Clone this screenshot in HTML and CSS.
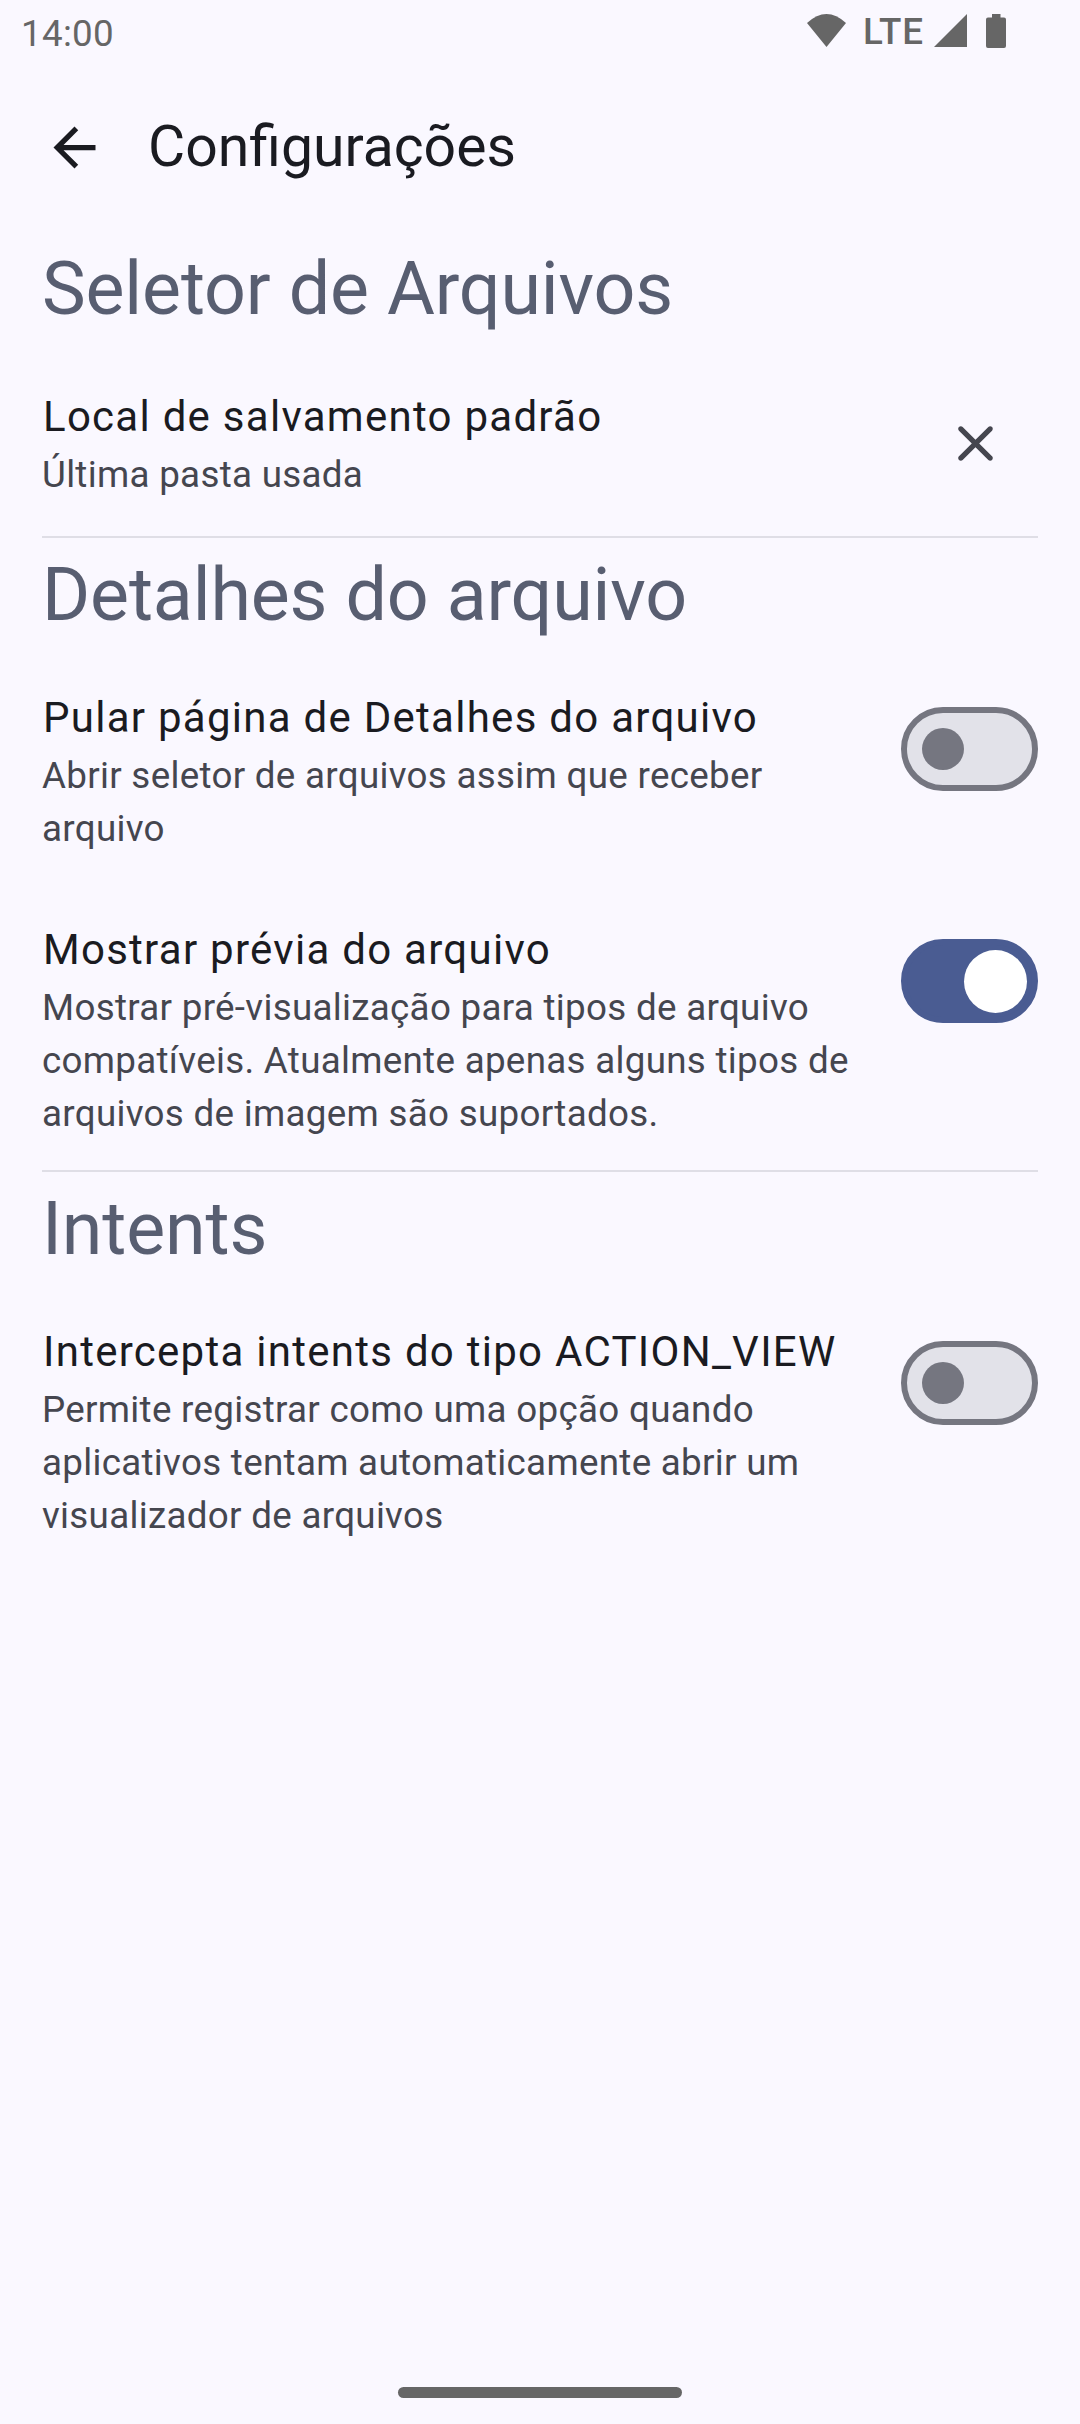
FILE: index.html
```html
<!DOCTYPE html>
<html lang="pt-BR">
<head>
<meta charset="utf-8">
<title>Configurações</title>
<link rel="stylesheet" href="styles.css">
</head>
<body>
<div class="screen">
  <header class="status">
    <span class="clock">14:00</span>
    <div class="indicators">
      <svg class="wifi" viewBox="0 0 39 33"><path d="M0 9Q19.500-9 39 9L19.500 33z"/></svg>
      <span class="network">LTE</span>
      <svg class="signal" viewBox="0 0 33 33"><path d="M33 0V33H0z"/></svg>
      <svg class="battery" viewBox="0 0 20 34"><path d="M6 0h8.500v3.500H18a2 2 0 0 1 2 2V32a2 2 0 0 1-2 2H2a2 2 0 0 1-2-2V5.500a2 2 0 0 1 2-2h4z"/></svg>
    </div>
  </header>
  <div class="appbar">
    <svg class="icon" viewBox="0 0 24 24"><path d="M20 11H7.830l5.590-5.590L12 4l-8 8 8 8 1.410-1.410L7.830 13H20z"/></svg>
    <h1 class="title">Configurações</h1>
  </div>
  <main class="content">
    <section class="section section-first">
      <h2 class="heading">Seletor de Arquivos</h2>
      <div class="row">
        <div class="text">
          <div class="label">Local de salvamento padrão</div>
          <div class="desc">Última pasta usada</div>
        </div>
        <button class="clear" aria-label="Limpar"><svg class="icon" viewBox="0 0 24 24"><path d="M18.300 5.710c-.39-.39-1.020-.39-1.410 0L12 10.590 7.110 5.700c-.39-.39-1.020-.39-1.410 0-.39.39-.39 1.020 0 1.410L10.590 12 5.700 16.890c-.39.39-.39 1.020 0 1.410.39.39 1.020.39 1.410 0L12 13.410l4.890 4.890c.39.39 1.020.39 1.410 0 .39-.39.39-1.020 0-1.410L13.410 12l4.890-4.890c.38-.38.38-1.020 0-1.400z"/></svg></button>
      </div>
    </section>
    <section class="section">
      <h2 class="heading">Detalhes do arquivo</h2>
      <div class="row">
        <div class="text">
          <div class="label">Pular página de Detalhes do arquivo</div>
          <div class="desc">Abrir seletor de arquivos assim que receber arquivo</div>
        </div>
        <div class="switch" role="switch" aria-checked="false"><span class="thumb"></span></div>
      </div>
      <div class="row">
        <div class="text">
          <div class="label">Mostrar prévia do arquivo</div>
          <div class="desc">Mostrar pré-visualização para tipos de arquivo compatíveis. Atualmente apenas alguns tipos de arquivos de imagem são suportados.</div>
        </div>
        <div class="switch on" role="switch" aria-checked="true"><span class="thumb"></span></div>
      </div>
    </section>
    <section class="section">
      <h2 class="heading">Intents</h2>
      <div class="row">
        <div class="text">
          <div class="label">Intercepta intents do tipo ACTION_VIEW</div>
          <div class="desc">Permite registrar como uma opção quando aplicativos tentam automaticamente abrir um visualizador de arquivos</div>
        </div>
        <div class="switch" role="switch" aria-checked="false"><span class="thumb"></span></div>
      </div>
    </section>
  </main>
  <footer class="nav"><div class="handle"></div></footer>
</div>
</body>
</html>
```
FILE: styles.css
```css
* { box-sizing: border-box; }
body {
  margin: 0;
  background: #faf8ff;
  color: #1a1b21;
  font-family: Roboto, "Liberation Sans", sans-serif;
}
.screen {
  width: 1080px;
  height: 2424px;
  display: flex;
  flex-direction: column;
}
svg { display: block; flex: none; fill: currentColor; }

.status {
  height: 63px;
  padding: 11px 74px 0 21px;
  display: flex;
  justify-content: space-between;
  align-items: flex-start;
  color: #666;
  font-size: 36.75px;
  line-height: 44px;
}
.clock { padding-top: 1px; letter-spacing: 0.3px; }
.indicators { display: flex; align-items: flex-start; }
.wifi { width: 39px; height: 33px; margin-top: 3px; }
.network {
  width: 59px;
  margin: -1px 12px 0 17px;
  font-weight: 500;
  letter-spacing: 0.7px;
  white-space: nowrap;
}
.signal { width: 33px; height: 33px; margin-top: 3px; }
.battery { width: 20px; height: 34px; margin: 3px 0 0 19px; }

.appbar {
  height: 168px;
  padding: 0 43px;
  display: flex;
  align-items: center;
  gap: 42px;
}
.icon { width: 63px; height: 63px; }
.title {
  margin: 0;
  font-size: 57.1px;
  line-height: 74px;
  font-weight: 400;
}

.content { flex: 1; padding: 0 42px; }
.section { padding: 10px 0 30px; }
.section + .section { border-top: 2px solid #dfdee6; }
.section-first { padding: 11px 0 35px; }
.heading {
  margin: 0 0 44px;
  font-size: 73.5px;
  line-height: 94px;
  font-weight: 400;
  letter-spacing: -0.14px;
  color: #585e71;
}
.section-first .heading { margin-bottom: 49px; }
.row { display: flex; align-items: flex-start; gap: 42px; }
.row + .row { margin-top: 63px; }
.text { flex: 1; min-width: 0; }
.label {
  padding-left: 1px;
  font-size: 42px;
  line-height: 63px;
  letter-spacing: 1.27px;
}
.desc {
  font-size: 36.75px;
  line-height: 53px;
  letter-spacing: 0.3px;
  color: #45464f;
}
.clear {
  margin: 27px 31px 0 0;
  padding: 0;
  border: 0;
  background: none;
  color: #45464f;
}
.switch {
  flex: none;
  width: 137px;
  height: 84px;
  margin-top: 21px;
  padding-left: 15px;
  border: 6px solid #757680;
  border-radius: 42px;
  background: #e2e2e9;
  display: flex;
  align-items: center;
}
.thumb {
  width: 42px;
  height: 42px;
  border-radius: 50%;
  background: #757680;
}
.switch.on {
  justify-content: flex-end;
  padding: 0 5px 0 0;
  border-color: #4a5c92;
  background: #4a5c92;
}
.switch.on .thumb { width: 63px; height: 63px; background: #fff; }

.nav {
  height: 37px;
  display: flex;
  justify-content: center;
  align-items: flex-start;
}
.handle {
  width: 284px;
  height: 11px;
  border-radius: 6px;
  background: #666;
}
```
